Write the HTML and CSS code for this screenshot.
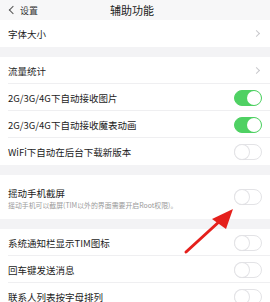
FILE: index.html
```html
<!DOCTYPE html>
<html>
<head>
<meta charset="utf-8">
<link rel="stylesheet" href="styles.css">
</head>
<body>
<div class="page">
  <div class="header">
    <div class="back"><span class="back-chev"></span><span>设置</span></div>
    <div class="title">辅助功能</div>
  </div>
  <div class="group">
    <div class="row"><span class="label">字体大小</span><span class="chev"></span></div>
  </div>
  <div class="gap"></div>
  <div class="group">
    <div class="row line"><span class="label">流量统计</span><span class="chev"></span></div>
    <div class="row line"><span class="label">2G/3G/4G下自动接收图片</span><span class="toggle on"></span></div>
    <div class="row line"><span class="label">2G/3G/4G下自动接收魔表动画</span><span class="toggle on"></span></div>
    <div class="row"><span class="label">WiFi下自动在后台下载新版本</span><span class="toggle"></span></div>
  </div>
  <div class="gap"></div>
  <div class="group">
    <div class="row tall">
      <div class="texts">
        <span class="label">摇动手机截屏</span>
        <span class="sub">摇动手机可以截屏(TIM以外的界面需要开启Root权限)。</span>
      </div>
      <span class="toggle"></span>
    </div>
  </div>
  <div class="gap"></div>
  <div class="group">
    <div class="row line"><span class="label">系统通知栏显示TIM图标</span><span class="toggle"></span></div>
    <div class="row line"><span class="label">回车键发送消息</span><span class="toggle"></span></div>
    <div class="row"><span class="label">联系人列表按字母排列</span><span class="toggle"></span></div>
  </div>
  <svg class="arrow" width="270" height="302" viewBox="0 0 270 302">
    <line x1="186" y1="252" x2="221" y2="220" stroke="#e5201c" stroke-width="3" stroke-linecap="round"/>
    <polygon points="233,209 212,219 226,229" fill="#e5201c"/>
  </svg>
</div>
</body>
</html>
```
FILE: styles.css
```css
* { box-sizing: border-box; margin: 0; padding: 0; }
html, body { width: 270px; height: 302px; overflow: hidden; }
body {
  background: #f3f3f5;
  font-family: "Noto Sans CJK SC", "Noto Sans", sans-serif;
  color: #1c1c1c;
}
.page { position: relative; width: 270px; height: 302px; }
.header {
  position: relative;
  height: 20px;
  background: #f7f7f8;
  display: flex;
  align-items: center;
  justify-content: center;
}
.back {
  position: absolute;
  left: 8px;
  top: 0;
  height: 20px;
  display: flex;
  align-items: center;
  gap: 4px;
  font-size: 9px;
  color: #333;
}
.back-chev {
  width: 6px;
  height: 6px;
  border-left: 1px solid #555;
  border-bottom: 1px solid #555;
  transform: rotate(45deg);
  margin-left: 2px;
}
.title { font-size: 11px; color: #222; margin-left: -6px; }
.group { background: #fff; }
.gap { height: 10px; background: #f3f3f5; }
.row {
  position: relative;
  height: 27px;
  display: flex;
  align-items: center;
  justify-content: space-between;
  padding: 0 8px;
}
.row.line::after {
  content: "";
  position: absolute;
  left: 8px;
  right: 0;
  bottom: 0;
  height: 1px;
  background: #efeff1;
}
.row.tall { height: 44px; }
.label { font-size: 9.5px; line-height: 12px; white-space: nowrap; }
.texts { display: flex; flex-direction: column; gap: 2px; padding-top: 3px; }
.sub { font-size: 6.9px; color: #9a9a9a; white-space: nowrap; line-height: 9px; }
.chev {
  width: 5px;
  height: 5px;
  border-right: 1px solid #c8c8cc;
  border-top: 1px solid #c8c8cc;
  transform: rotate(45deg);
  margin-right: 3px;
}
.toggle {
  position: relative;
  width: 28px;
  height: 16px;
  border-radius: 8px;
  border: 1px solid #e3e3e6;
  background: #fff;
  flex: none;
}
.toggle::after {
  content: "";
  position: absolute;
  left: 0;
  top: 0;
  width: 14px;
  height: 14px;
  border-radius: 50%;
  background: #fff;
  box-shadow: 0 0 0 1px #e3e3e6, 0 1px 1px rgba(0,0,0,0.06);
}
.toggle.on { background: #4fd163; border-color: #4fd163; }
.toggle.on::after { left: 12px; box-shadow: none; }
.arrow { position: absolute; left: 0; top: 0; pointer-events: none; }
```
